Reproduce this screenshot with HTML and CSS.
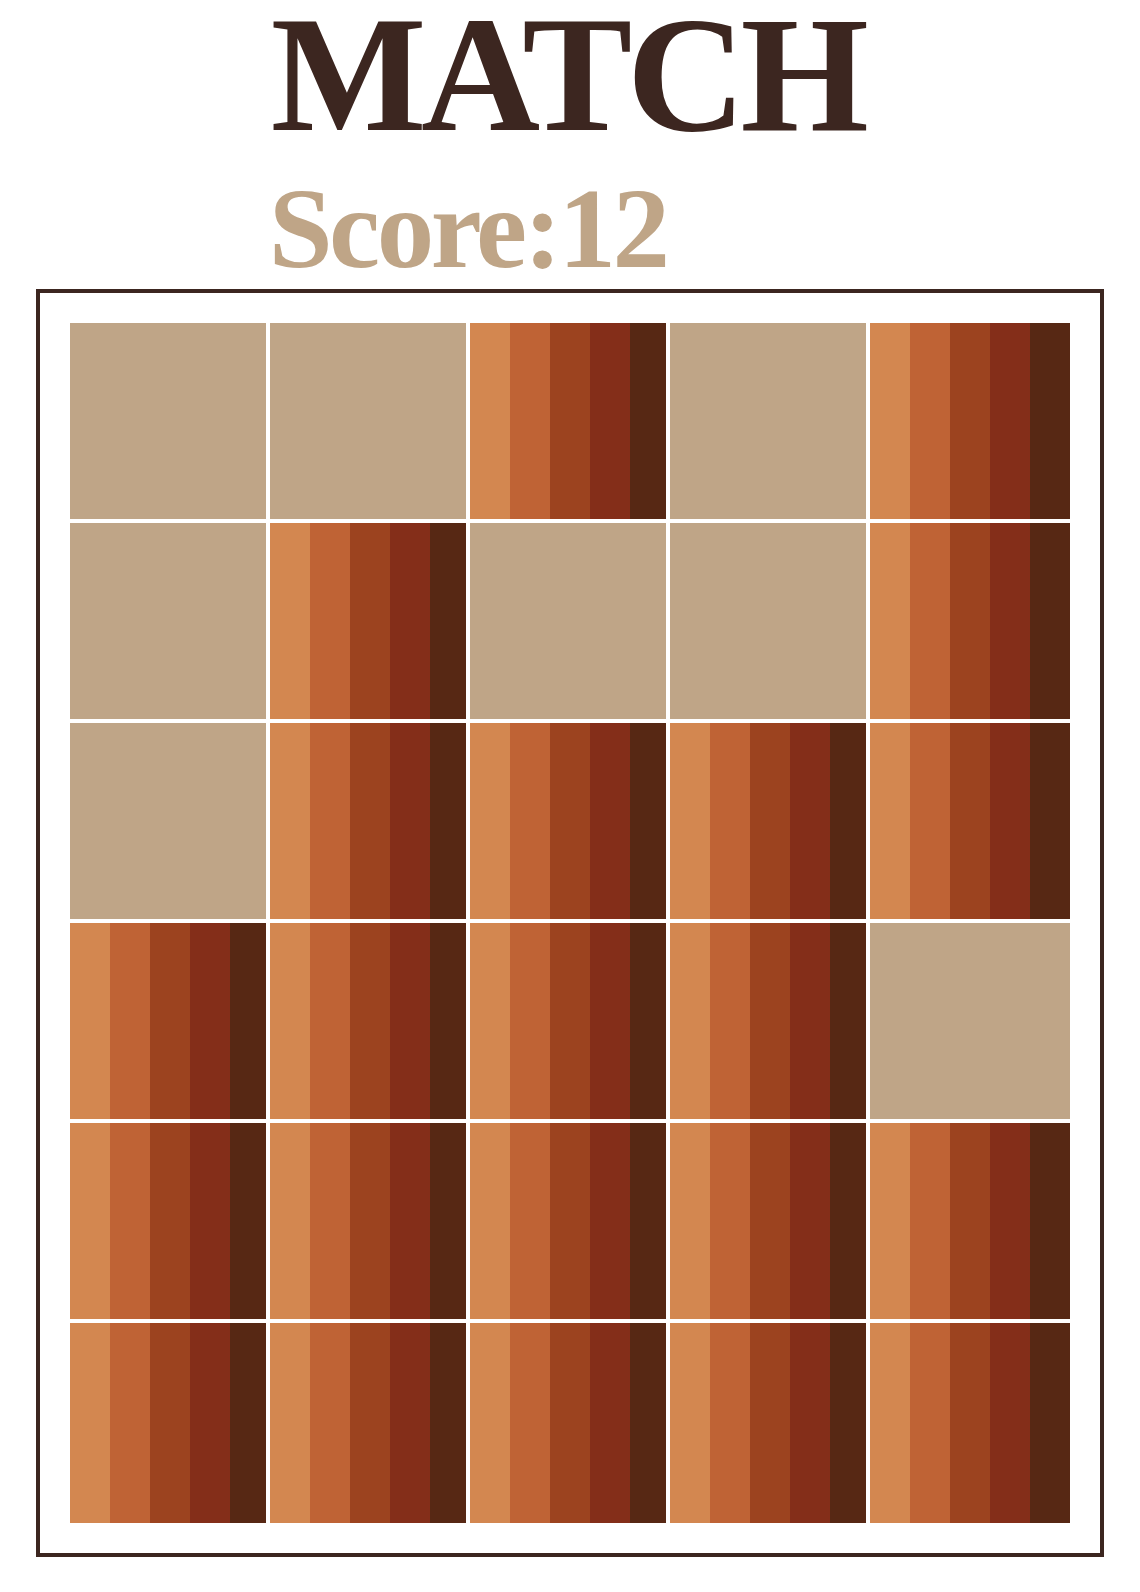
FILE: index.html
```html
<!DOCTYPE html>
<html>
  <head>
    <meta charset="utf-8">
    <title>Match</title>
    <link rel="stylesheet" href="styles.css">
  </head>
  <body>
    <div class="head">
      <h1 class="title">MATCH</h1>
      <div class="score">Score:<span id="score">12</span></div>
    </div>

    <div class="board">
      <div class="grid">
        <div class="tile done"></div>
        <div class="tile done"></div>
        <div class="tile"></div>
        <div class="tile done"></div>
        <div class="tile"></div>

        <div class="tile done"></div>
        <div class="tile"></div>
        <div class="tile done"></div>
        <div class="tile done"></div>
        <div class="tile"></div>

        <div class="tile done"></div>
        <div class="tile"></div>
        <div class="tile"></div>
        <div class="tile"></div>
        <div class="tile"></div>

        <div class="tile"></div>
        <div class="tile"></div>
        <div class="tile"></div>
        <div class="tile"></div>
        <div class="tile done"></div>

        <div class="tile"></div>
        <div class="tile"></div>
        <div class="tile"></div>
        <div class="tile"></div>
        <div class="tile"></div>

        <div class="tile"></div>
        <div class="tile"></div>
        <div class="tile"></div>
        <div class="tile"></div>
        <div class="tile"></div>
      </div>
    </div>
  </body>
</html>
```

FILE: styles.css
```css
html, body {
  margin: 0;
  padding: 0;
  background: #fff;
  font-family: "Liberation Serif", "Times New Roman", serif;
  font-weight: 700;
}

.head {
  width: fit-content;
  margin: 0 auto;
}

.title {
  margin: 0;
  padding-right: 6px;
  font-size: 165px;
  line-height: 150px;
  letter-spacing: -5.5px;
  color: #3c2620;
  white-space: nowrap;
}

.score {
  margin-top: 19px;
  margin-left: -2px;
  font-size: 115px;
  line-height: 120px;
  letter-spacing: -3.5px;
  color: #bfa587;
  white-space: nowrap;
}

.board {
  width: 1068px;
  margin: 0 auto;
  box-sizing: border-box;
  border: 4px solid #3c2620;
  padding: 30px;
}

.grid {
  display: grid;
  grid-template-columns: repeat(4, 196px) 200px;
  grid-template-rows: repeat(5, 196px) 200px;
  gap: 4px;
}

.tile {
  background: linear-gradient(to right,
    #d38750 0 40px,
    #bf6335 40px 80px,
    #9c431f 80px 120px,
    #842e19 120px 160px,
    #572814 160px);
}

.tile.done {
  background: #bfa587;
}
```
